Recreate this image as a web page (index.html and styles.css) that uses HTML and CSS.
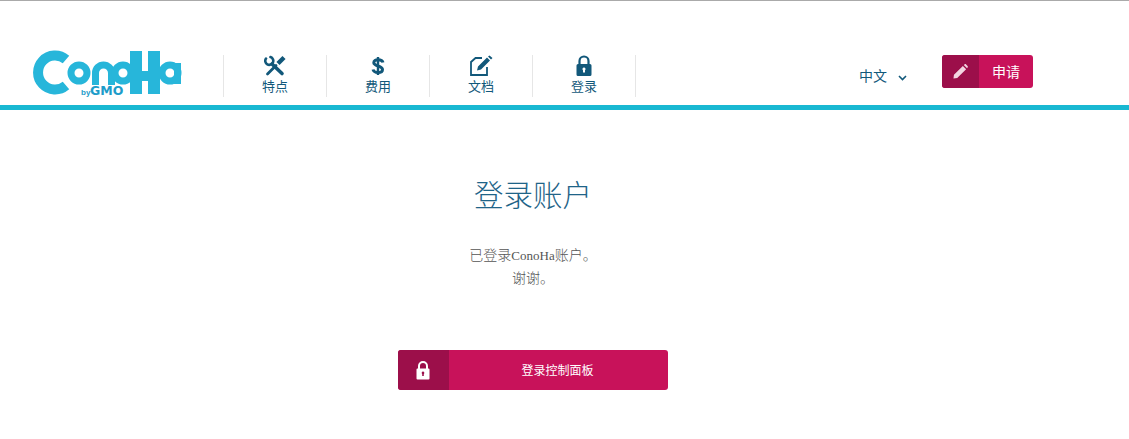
FILE: index.html
```html
<!doctype html>
<html lang="zh">
  <head>
    <meta charset="UTF-8" />
    <title>登录账户</title>
    <link rel="stylesheet" href="styles.css">
  </head>
  <body>
    <header class="site-header">
      <a class="logo" href="#">
        <svg width="150" height="50" viewBox="0 0 150 50">
          <g fill="none" stroke="#27b6da">
            <path stroke-width="10" d="M33 9.500 A17 17 0 1 0 33 35.500" />
            <circle stroke-width="7" cx="46" cy="23" r="8" />
            <path stroke-width="7" d="M62.500 35 V23 A8 8 0 0 1 78.500 23 V35" />
            <circle stroke-width="7" cx="90" cy="23" r="8" />
            <circle stroke-width="7" cx="137" cy="23" r="8" />
          </g>
          <g fill="#27b6da">
            <rect x="97" y="1" width="12" height="43" />
            <rect x="115" y="1" width="12" height="43" />
            <rect x="109" y="21" width="6" height="10" />
            <rect x="141" y="13" width="7" height="21" />
          </g>
          <g fill="#1d9cc9">
            <text class="logo-by" x="48" y="45">by</text>
            <text class="logo-gmo" x="57" y="45">GMO</text>
          </g>
        </svg>
      </a>

      <nav class="main-nav">
        <a class="nav-item" href="#">
          <svg class="nav-icon" width="22" height="22" viewBox="0 0 22 22">
            <g fill="none" stroke="#12587a" stroke-linecap="round">
              <path stroke-width="2.600" d="M2 3.500 A4 4 0 1 0 6.500 2" />
              <path stroke-width="3.600" d="M8 9 L18 18.500" />
              <path stroke-width="2.800" d="M3.500 19 L12 10.500" />
              <path stroke-width="4.400" stroke-linecap="butt" d="M14 8.500 L20 2.500" />
            </g>
          </svg>
          <span>特点</span>
        </a>
        <a class="nav-item" href="#">
          <svg class="nav-icon" width="14" height="22" viewBox="0 0 14 22">
            <g fill="none" stroke="#12587a">
              <path stroke-width="3" d="M12 7.500 C11.500 5.500 9.500 4.800 7 4.800 C4.500 4.800 2.800 5.800 2.800 7.800 C2.800 11.500 11.500 10.500 11.500 14.500 C11.500 16.500 9.500 17.500 7 17.500 C4.500 17.500 2.500 16.500 2 14.500" />
              <path stroke-width="2.400" d="M7 2 V20" />
            </g>
          </svg>
          <span>费用</span>
        </a>
        <a class="nav-item" href="#">
          <svg class="nav-icon" width="24" height="22" viewBox="0 0 24 22">
            <path fill="none" stroke="#12587a" stroke-width="1.800" d="M18 12 V20 H2 V7 L6.500 3 H13" />
            <path fill="#12587a" d="M8 15.500 L9 11.500 L18 2.500 L21 5.500 L12 14.500 Z M19 1.500 L20.500 0.500 L23.500 3 L22 4.500 Z" />
          </svg>
          <span>文档</span>
        </a>
        <a class="nav-item" href="#">
          <svg class="nav-icon" width="16" height="22" viewBox="0 0 16 22">
            <path fill="none" stroke="#12587a" stroke-width="2.200" d="M3.500 9 V6 A4.500 4.500 0 0 1 12.500 6 V9" />
            <path fill="#12587a" fill-rule="evenodd" d="M2 9 H14 A1.500 1.500 0 0 1 15.500 10.500 V19.500 A1.500 1.500 0 0 1 14 21 H2 A1.500 1.500 0 0 1 0.500 19.500 V10.500 A1.500 1.500 0 0 1 2 9 Z M8 12.500 A1.600 1.600 0 0 0 7 15.300 V17.500 H9 V15.300 A1.600 1.600 0 0 0 8 12.500 Z" />
          </svg>
          <span>登录</span>
        </a>
      </nav>

      <div class="header-right">
        <a class="lang" href="#">
          中文
          <svg width="9" height="6" viewBox="0 0 9 6">
            <path fill="none" stroke="#12587a" stroke-width="1.600" d="M1 1 L4.500 4.500 L8 1" />
          </svg>
        </a>
        <a class="btn btn-signup" href="#">
          <span class="btn-icon">
            <svg width="15" height="15" viewBox="0 0 16 16">
              <path fill="#f3d5e1" d="M1 11.500 L10.500 2 L14 5.500 L4.500 15 L0.500 15.500 Z M11.500 1 L12.500 0.300 C13 0 13.500 0 14 0.500 L15.500 2 C16 2.500 16 3 15.700 3.500 L15 4.500 Z" />
            </svg>
          </span>
          <span class="btn-label">申请</span>
        </a>
      </div>
    </header>

    <main class="content">
      <h1>登录账户</h1>
      <p class="message">已登录<span class="latin">ConoHa</span>账户。<br>谢谢。</p>
      <a class="btn btn-panel" href="#">
        <span class="btn-icon">
          <svg width="14" height="19" viewBox="0 0 14 19">
            <path fill="none" stroke="#fff" stroke-width="2" d="M3 8 V5 A4 4 0 0 1 11 5 V8" />
            <path fill="#fff" fill-rule="evenodd" d="M1.500 7.500 H12.500 A1 1 0 0 1 13.500 8.500 V17.500 A1 1 0 0 1 12.500 18.500 H1.500 A1 1 0 0 1 0.500 17.500 V8.500 A1 1 0 0 1 1.500 7.500 Z M7 10.500 A1.400 1.400 0 0 0 6.200 13 V15 H7.800 V13 A1.400 1.400 0 0 0 7 10.500 Z" />
          </svg>
        </span>
        <span class="btn-label">登录控制面板</span>
      </a>
    </main>
  </body>
</html>
```

FILE: styles.css
```css
:root {
  --navy: #12587a;
  --teal: #19b8d2;
  --pink: #c8125a;
  --pink-dark: #9c0f4a;
  --border-color: #e6e6e6;
}

* {
  margin: 0;
  padding: 0;
  box-sizing: border-box;
}

body {
  font-family: "Noto Sans CJK SC", "Liberation Sans", sans-serif;
  font-weight: 300;
  color: #555;
  background-color: white;
  border-top: 1px solid #aaa;
}

a {
  text-decoration: none;
}

.site-header {
  display: flex;
  align-items: flex-start;
  height: 109px;
  padding: 49px 96px 0 33px;
  border-bottom: 5px solid var(--teal);
}

.logo {
  display: block;
  width: 190px;
  height: 50px;
}

.logo-by {
  font: bold 8px "Liberation Sans", sans-serif;
}

.logo-gmo {
  font: bold 12.500px "DejaVu Sans", sans-serif;
}

.main-nav {
  display: flex;
  margin-top: 5px;
  border-right: 1px solid var(--border-color);
}

.nav-item {
  display: flex;
  flex-direction: column;
  align-items: center;
  width: 103px;
  height: 42px;
  border-left: 1px solid var(--border-color);
  color: var(--navy);
  font-size: 13px;
  font-weight: 400;
  line-height: 18px;
}

.nav-icon {
  display: block;
  height: 22px;
}

.header-right {
  display: flex;
  align-items: flex-start;
  margin-left: auto;
  margin-top: 5px;
}

.lang {
  display: flex;
  align-items: center;
  gap: 11px;
  margin-top: 10px;
  margin-right: 35px;
  color: var(--navy);
  font-size: 14px;
  font-weight: 400;
  line-height: 20px;
}

.lang svg {
  margin-top: 5px;
}

.btn {
  display: flex;
  overflow: hidden;
  border-radius: 3px;
  background-color: var(--pink);
  color: white;
}

.btn-icon {
  display: flex;
  align-items: center;
  justify-content: center;
  background-color: var(--pink-dark);
}

.btn-label {
  flex: 1;
  text-align: center;
}

.btn-signup {
  width: 91px;
  height: 33px;
  font-size: 14px;
  font-weight: 400;
  line-height: 33px;
}

.btn-signup .btn-icon {
  width: 37px;
}

.content {
  display: flex;
  flex-direction: column;
  align-items: center;
  width: 1066px;
  padding-top: 63px;
}

h1 {
  color: #1f6488;
  font-size: 29.500px;
  font-weight: 300;
  line-height: 40px;
}

.message {
  margin-top: 30px;
  font-size: 14px;
  line-height: 23px;
  text-align: center;
}

.latin {
  font-family: "Liberation Serif", serif;
  font-weight: 400;
  font-size: 13px;
  line-height: 1;
}

.btn-panel {
  width: 270px;
  height: 40px;
  margin-top: 61px;
  font-size: 12px;
  font-weight: 400;
  line-height: 40px;
}

.btn-panel .btn-icon {
  width: 51px;
  padding-right: 1px;
}

.btn-panel .btn-label {
  padding-right: 2px;
}
```
